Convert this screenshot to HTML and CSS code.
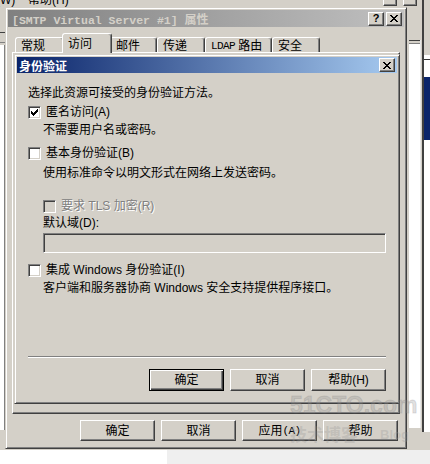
FILE: index.html
```html
<!DOCTYPE html>
<html lang="zh-CN">
<head>
<meta charset="utf-8">
<title>SMTP Virtual Server 属性</title>
<link rel="stylesheet" href="styles.css">
</head>
<body>
<div class="desk">
  <div class="backwin">
    <div class="bw-cols">
      <div class="bw-left">
        <div class="bw-left-head"></div>
        <div class="bw-left-white"></div>
      </div>
      <div class="bw-mid"></div>
      <div class="bw-right">
        <div class="bw-r-pad"></div>
        <div class="bw-r-white"></div>
        <div class="bw-r-gap"></div>
        <div class="bw-r-line"></div>
        <div class="bw-r-edge">
          <div class="bw-r-top"></div>
          <div class="bw-r-txt"></div>
          <div class="bw-r-navy"></div>
          <div class="bw-r-rest"></div>
        </div>
      </div>
    </div>
    <div class="bw-menu"><span class="bw-w">(W)</span><span class="bw-help">帮助(H)</span></div>
    <div class="bw-caps"><span class="bw-cap"></span><span class="bw-cap"></span></div>
  </div>
  <div class="floor"></div>

  <div class="win outer">
    <div class="title inactive">
      <span class="title-text">[SMTP Virtual Server #1] <span class="cjk">属性</span></span>
      <span class="tbtn help">?</span>
      <span class="tbtn close"><svg width="8" height="7" viewBox="0 0 8 7"><path d="M0 0h2v1h-2z M6 0h2v1h-2z M1 1h2v1h-2z M5 1h2v1h-2z M2 2h4v1h-4z M3 3h2v1h-2z M2 4h4v1h-4z M1 5h2v1h-2z M5 5h2v1h-2z M0 6h2v1h-2z M6 6h2v1h-2z" fill="#000"/></svg></span>
    </div>
    <div class="outer-body">
      <div class="tabs">
        <div class="tab w49">常规</div>
        <div class="tab sel w50">访问</div>
        <div class="tab w47">邮件</div>
        <div class="tab w48">传递</div>
        <div class="tab w67"><span class="mono">LDAP</span>&nbsp;路由</div>
        <div class="tab w48">安全</div>
      </div>
      <div class="panel"></div>
      <div class="btnrow outer-btns">
        <div class="btn">确定</div>
        <div class="btn">取消</div>
        <div class="btn">应用<span class="mono">(A)</span></div>
        <div class="btn">帮助</div>
      </div>
    </div>
  </div>

  <div class="win inner">
    <div class="title active">
      <span class="title-text cjk-bold">身份验证</span>
      <span class="tbtn close"><svg width="8" height="7" viewBox="0 0 8 7"><path d="M0 0h2v1h-2z M6 0h2v1h-2z M1 1h2v1h-2z M5 1h2v1h-2z M2 2h4v1h-4z M3 3h2v1h-2z M2 4h4v1h-4z M1 5h2v1h-2z M5 5h2v1h-2z M0 6h2v1h-2z M6 6h2v1h-2z" fill="#000"/></svg></span>
    </div>
    <div class="inner-body">
      <div class="line l-intro">选择此资源可接受的身份验证方法。</div>
      <div class="cbrow l-anon">
        <span class="cb"><svg width="7" height="7" viewBox="0 0 7 7"><path d="M6 0h1v1h-1z M5 1h2v1h-2z M0 2h1v1h-1z M4 2h3v1h-3z M0 3h2v1h-2z M3 3h3v1h-3z M0 4h5v1h-5z M1 5h3v1h-3z M2 6h1v1h-1z" fill="#000"/></svg></span>
        <span>匿名访问(A)</span>
      </div>
      <div class="line sub l-anon-desc">不需要用户名或密码。</div>
      <div class="cbrow l-basic">
        <span class="cb"></span>
        <span>基本身份验证(B)</span>
      </div>
      <div class="line sub l-basic-desc">使用标准命令以明文形式在网络上发送密码。</div>
      <div class="cbrow sub l-tls disabled">
        <span class="cb dis"></span>
        <span>要求 TLS 加密(R)</span>
      </div>
      <div class="line sub l-domain">默认域(D):</div>
      <div class="textbox"></div>
      <div class="cbrow l-win">
        <span class="cb"></span>
        <span>集成 Windows 身份验证(I)</span>
      </div>
      <div class="line sub l-win-desc">客户端和服务器协商 Windows 安全支持提供程序接口。</div>
      <div class="sep"></div>
      <div class="btnrow inner-btns">
        <div class="btn default">确定</div>
        <div class="btn">取消</div>
        <div class="btn">帮助(H)</div>
      </div>
    </div>
  </div>

  <div class="watermark">
    <div class="wm-big">51CTO.com</div>
    <div class="wm-row"><span class="wm-cn">技术博客</span><span class="wm-blog">Blog</span></div>
  </div>
</div>
</body>
</html>
```

FILE: styles.css
```css
* { box-sizing: border-box; }
html, body { margin: 0; padding: 0; }
body {
  width: 430px;
  height: 464px;
  overflow: hidden;
  background: #ffffff;
  font-family: "Liberation Sans", "Noto Sans CJK SC", sans-serif;
  font-size: 12px;
  color: #000;
}
.desk { position: relative; width: 430px; height: 464px; }

/* ---------- background window ---------- */
.backwin {
  position: absolute;
  left: 0; top: 0;
  width: 430px; height: 450px;
  background: #d4d0c8;
  overflow: hidden;
}
.bw-cols { display: flex; height: 100%; }
.bw-left { width: 5px; display: flex; flex-direction: column; }
.bw-left-head {
  height: 45px;
  background: linear-gradient(#d4d0c8 0 32px, #404040 32px 33px, #d4d0c8 33px 42px, #808080 42px 43px, #d4d0c8 43px);
}
.bw-left-white { height: 385px; background: #fff; border-right: 1px solid #808080; }
.bw-mid { flex: 1; }
.bw-right { width: 23px; display: flex; }
.bw-r-pad { width: 2px; }
.bw-r-white {
  width: 12px;
  margin-top: 40px;
  height: 388px;
  background: linear-gradient(#404040 0 1px, #d4d0c8 1px 3px, #808080 3px 4px, #fff 4px);
  border-right: 1px solid #e8e8e8;
}
.bw-r-gap { width: 1px; }
.bw-r-line { width: 2px; height: 432px; background: #404040; }
.bw-r-edge { width: 6px; display: flex; flex-direction: column; }
.bw-r-top { height: 55px; background: #d4d0c8; }
.bw-r-txt { height: 22px; background: #fff; box-shadow: inset 0 4px #fff, inset 0 5px #333; }
.bw-r-navy { height: 63px; background: #0a246a; }
.bw-r-rest { flex: 1; background: #fff; box-shadow: inset 0 -18px #d4d0c8; }

.bw-menu {
  position: absolute;
  left: -4px; top: -8px;
  display: flex;
  line-height: 16px;
  white-space: nowrap;
}
.bw-w { width: 32px; }
.bw-caps { position: absolute; left: 383px; top: -8px; display: flex; gap: 6px; }
.bw-cap {
  width: 14px; height: 14px;
  background: #d4d0c8;
  border: 1px solid;
  border-color: #fff #404040 #404040 #fff;
  box-shadow: inset -1px -1px #808080;
}
.floor {
  position: absolute;
  left: 167px; top: 450px;
  width: 263px; height: 14px;
  background: #efefef;
}

/* ---------- windows ---------- */
.win {
  position: absolute;
  background: #d4d0c8;
  border: 1px solid;
  border-color: #d4d0c8 #404040 #404040 #d4d0c8;
  box-shadow: inset 1px 1px #fff, inset -1px -1px #808080;
  padding: 2px;
  display: flex;
  flex-direction: column;
}
.outer { left: 5px; top: 7px; width: 402px; height: 442px; }
.inner { left: 14px; top: 54px; width: 386px; height: 350px; z-index: 3; }

.title {
  display: flex;
  align-items: center;
  flex-shrink: 0;
  white-space: nowrap;
}
.title.inactive {
  height: 17px;
  padding: 0 2px 0 4px;
  background: linear-gradient(to right, #808080, #c0c0c0);
}
.title.active {
  height: 16px;
  padding: 0 2px 0 2px;
  background: linear-gradient(to right, #0a246a, #a6caf0);
}
.title-text {
  font-family: "Liberation Mono", "Noto Sans CJK SC", monospace;
  font-weight: bold;
  font-size: 11.5px;
  color: #d4d0c8;
  margin-right: auto;
}
.title-text .cjk { font-family: "Noto Sans CJK SC", sans-serif; font-size: 12px; }
.title-text.cjk-bold {
  font-family: "Noto Sans CJK SC", sans-serif;
  font-size: 12px;
  color: #fff;
}
.tbtn {
  width: 16px; height: 14px;
  background: #d4d0c8;
  border: 1px solid;
  border-color: #fff #404040 #404040 #fff;
  box-shadow: inset -1px -1px #808080;
  display: flex;
  align-items: center;
  justify-content: center;
  font-family: "Liberation Sans", sans-serif;
  font-weight: bold;
  font-size: 11px;
  line-height: 1;
  color: #000;
}
.tbtn.help + .tbtn.close { margin-left: 2px; }
.tbtn svg { display: block; }

/* ---------- outer body ---------- */
.outer-body {
  flex: 1;
  display: flex;
  flex-direction: column;
  padding: 6px 4px 5px 4px;
}
.tabs {
  display: flex;
  align-items: flex-end;
  height: 20px;
  margin-left: 3px;
  margin-bottom: -1px;
  position: relative;
  z-index: 1;
}
.tab {
  height: 15px;
  margin-bottom: 1px;
  border: 1px solid;
  border-bottom: none;
  border-color: #fff #404040 transparent #fff;
  border-radius: 3px 3px 0 0;
  box-shadow: inset -1px 0 #808080;
  background: #d4d0c8;
  display: flex;
  align-items: center;
  padding: 2px 0 0 5px;
  white-space: nowrap;
  line-height: 14px;
}
.tab.sel {
  height: 20px;
  margin: 0 -2px;
  padding-top: 0;
  position: relative;
  z-index: 2;
}
.w47 { width: 47px; }
.w48 { width: 48px; }
.w49 { width: 49px; }
.w50 { width: 50px; }
.w67 { width: 67px; }
.mono { font-family: "Liberation Mono", monospace; font-size: 11px; letter-spacing: -0.6px; }
.panel {
  flex: 1;
  border: 1px solid;
  border-color: #fff #404040 #404040 #fff;
  box-shadow: inset -1px -1px #808080;
}
.btnrow { display: flex; justify-content: flex-end; gap: 6px; flex-shrink: 0; }
.outer-btns { margin-top: 6px; padding-right: 2px; }
.btn {
  width: 75px;
  height: 21px;
  background: #d4d0c8;
  border: 1px solid;
  border-color: #fff #404040 #404040 #fff;
  box-shadow: inset -1px -1px #808080;
  display: flex;
  align-items: center;
  justify-content: center;
  white-space: nowrap;
  line-height: 14px;
}
.inner-btns .btn { height: 22px; }
.btn.default {
  border-color: #000;
  box-shadow: inset 1px 1px #fff, inset -1px -1px #404040, inset -2px -2px #808080;
}

/* ---------- inner body ---------- */
.inner-body {
  flex: 1;
  display: flex;
  flex-direction: column;
  padding: 0 11px 10px 11px;
}
.line { line-height: 16px; height: 16px; white-space: nowrap; }
.sub { padding-left: 15px; }
.cbrow {
  display: flex;
  align-items: center;
  height: 16px;
  line-height: 16px;
  white-space: nowrap;
}
.cb {
  width: 13px; height: 13px;
  flex-shrink: 0;
  margin-right: 5px;
  background: #fff;
  border: 1px solid;
  border-color: #808080 #fff #fff #808080;
  box-shadow: inset 1px 1px #404040, inset -1px -1px #d4d0c8;
  display: flex;
  align-items: center;
  justify-content: center;
}
.cb svg { display: block; }
.cb.dis { background: #d4d0c8; }
.disabled { color: #808080; text-shadow: 1px 1px #fff; }

.l-intro { margin-top: 12px; }
.l-anon { margin-top: 3px; }
.l-anon-desc { margin-top: 2px; }
.l-basic { margin-top: 7px; }
.l-basic-desc { margin-top: 4px; }
.l-tls { margin-top: 17px; }
.l-domain { margin-top: 1px; }
.textbox {
  margin: 2px 0 0 15px;
  height: 20px;
  background: #d4d0c8;
  border: 1px solid;
  border-color: #808080 #fff #fff #808080;
  box-shadow: inset 1px 1px #404040, inset -1px -1px #d4d0c8;
}
.l-win { margin-top: 9px; }
.l-win-desc { margin-top: 2px; }
.sep {
  margin-top: auto;
  height: 2px;
  border-top: 1px solid #808080;
  border-bottom: 1px solid #fff;
  flex-shrink: 0;
}
.inner-btns { margin-top: 11px; }

/* ---------- watermark overlay ---------- */
.watermark {
  position: absolute;
  left: 290px; top: 392px;
  z-index: 10;
  pointer-events: none;
  color: rgba(150, 150, 150, 0.3);
  white-space: nowrap;
}
.wm-big {
  font-family: "Liberation Sans", sans-serif;
  font-weight: bold;
  font-size: 23px;
  line-height: 26px;
  -webkit-text-stroke: 1px rgba(120, 120, 120, 0.2);
}
.wm-row { display: flex; align-items: center; margin-top: 6px; }
.wm-cn { font-family: "Noto Sans CJK SC", sans-serif; font-weight: bold; font-size: 17px; line-height: 20px; }
.wm-blog { font-family: "Liberation Sans", sans-serif; font-weight: bold; font-size: 13px; margin-left: 22px; }
```
